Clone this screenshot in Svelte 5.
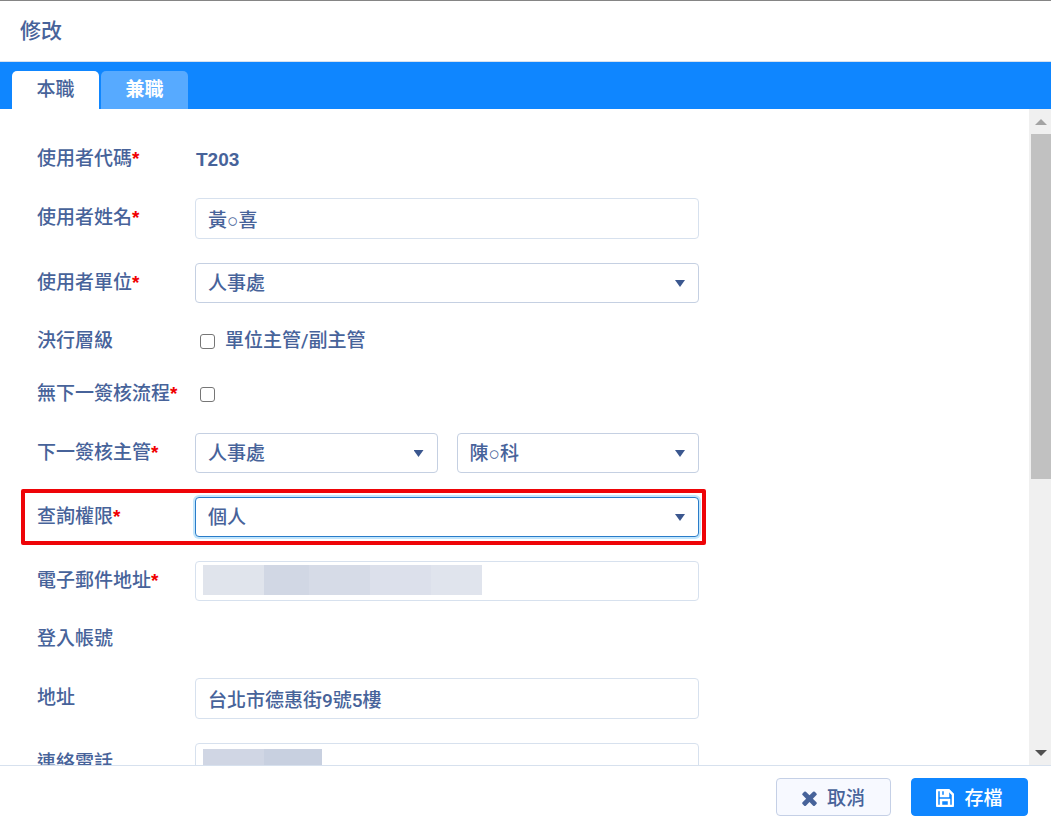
<script lang="ts">
	interface Tab {
		id: string;
		label: string;
	}

	const tabs: Tab[] = [
		{ id: 'main', label: '本職' },
		{ id: 'extra', label: '兼職' },
	];

	const units = ['人事處', '總務處', '會計處'];
	const managers = ['陳○科', '林○明'];
	const scopes = ['個人', '單位', '全部'];

	let activeTab = $state('main');
	let name = $state('黃○喜');
	let unit = $state('人事處');
	let isManager = $state(false);
	let noNextStep = $state(false);
	let nextUnit = $state('人事處');
	let nextManager = $state('陳○科');
	let scope = $state('個人');
	let email = $state('');
	let address = $state('台北市德惠街9號5樓');
	let phone = $state('');

	let bodyEl: HTMLDivElement | undefined = $state();

	function scrollBody(delta: number) {
		bodyEl?.scrollBy({ top: delta, behavior: 'smooth' });
	}
</script>

{#snippet label(text: string, required: boolean, target: string)}
	<label class="label" for={target}>{text}{#if required}<span class="required">*</span>{/if}</label>
{/snippet}

<div class="dialog">
	<header class="dialog-header">
		<h1>修改</h1>
	</header>

	<nav class="tabs" role="tablist">
		{#each tabs as tab (tab.id)}
			<button
				type="button"
				role="tab"
				class="tab"
				class:active={tab.id === activeTab}
				aria-selected={tab.id === activeTab}
				onclick={() => (activeTab = tab.id)}
			>
				{tab.label}
			</button>
		{/each}
	</nav>

	<div class="dialog-main">
		<div class="dialog-body" bind:this={bodyEl}>
			<form id="user-form" class="form" onsubmit={(e) => e.preventDefault()}>
				<div class="row">
					{@render label('使用者代碼', true, 'user-code')}
					<output class="value" id="user-code">T203</output>
				</div>

				<div class="row">
					{@render label('使用者姓名', true, 'user-name')}
					<input class="control" id="user-name" type="text" bind:value={name} />
				</div>

				<div class="row">
					{@render label('使用者單位', true, 'user-unit')}
					<div class="select-wrap">
						<select class="control" id="user-unit" bind:value={unit}>
							{#each units as item}<option>{item}</option>{/each}
						</select>
					</div>
				</div>

				<div class="row">
					{@render label('決行層級', false, 'is-manager')}
					<div class="check">
						<input id="is-manager" type="checkbox" bind:checked={isManager} />
						<label for="is-manager">單位主管/副主管</label>
					</div>
				</div>

				<div class="row">
					{@render label('無下一簽核流程', true, 'no-next')}
					<div class="check">
						<input id="no-next" type="checkbox" bind:checked={noNextStep} />
					</div>
				</div>

				<div class="row">
					{@render label('下一簽核主管', true, 'next-unit')}
					<div class="pair">
						<div class="select-wrap">
							<select class="control" id="next-unit" bind:value={nextUnit}>
								{#each units as item}<option>{item}</option>{/each}
							</select>
						</div>
						<div class="select-wrap">
							<select class="control" aria-label="下一簽核主管" bind:value={nextManager}>
								{#each managers as item}<option>{item}</option>{/each}
							</select>
						</div>
					</div>
				</div>

				<div class="row highlight">
					{@render label('查詢權限', true, 'scope')}
					<div class="select-wrap">
						<select class="control focused" id="scope" bind:value={scope}>
							{#each scopes as item}<option>{item}</option>{/each}
						</select>
					</div>
				</div>

				<div class="row">
					{@render label('電子郵件地址', true, 'email')}
					<div class="masked">
						<input class="control" id="email" type="email" bind:value={email} />
						<div class="mask mask-email" aria-hidden="true"></div>
					</div>
				</div>

				<div class="row">
					{@render label('登入帳號', false, 'account')}
					<output class="value" id="account"></output>
				</div>

				<div class="row">
					{@render label('地址', false, 'address')}
					<input class="control" id="address" type="text" bind:value={address} />
				</div>

				<div class="row">
					{@render label('連絡電話', false, 'phone')}
					<div class="masked">
						<input class="control" id="phone" type="tel" bind:value={phone} />
						<div class="mask mask-phone" aria-hidden="true"></div>
					</div>
				</div>
			</form>
		</div>

		<div class="scrollbar">
			<button type="button" class="scroll-btn up" aria-label="向上捲動" onclick={() => scrollBody(-64)}>
				<svg viewBox="0 0 12 6"><path d="M0 6L6 0L12 6Z" /></svg>
			</button>
			<div class="track"><div class="thumb"></div></div>
			<button type="button" class="scroll-btn down" aria-label="向下捲動" onclick={() => scrollBody(64)}>
				<svg viewBox="0 0 12 6"><path d="M0 0L6 6L12 0Z" /></svg>
			</button>
		</div>
	</div>

	<footer class="dialog-footer">
		<button type="button" class="btn">
			<svg class="icon-close" viewBox="302 334 1188 1220">
				<path d="M1490 1322q0 40-28 68l-136 136q-28 28-68 28t-68-28l-294-294-294 294q-28 28-68 28t-68-28l-136-136q-28-28-28-68t28-68l294-294-294-294q-28-28-28-68t28-68l136-136q28-28 68-28t68 28l294 294 294-294q28-28 68-28t68 28l136 136q28 28 28 68t-28 68l-294 294 294 294q28 28 28 68z" />
			</svg>
			取消
		</button>
		<button type="submit" form="user-form" class="btn primary">
			<svg class="icon-save" viewBox="0 0 18 18">
				<path fill-rule="evenodd" d="M1.500 0H13L18 5V16.500Q18 18 16.500 18H1.500Q0 18 0 16.500V1.500Q0 0 1.500 0ZM2 2V16H4V10H14V16H16V6L13 3V8H4V2ZM6 2V6H8V2ZM6 12V16H12V12Z" />
			</svg>
			存檔
		</button>
	</footer>
</div>

<style>
	:global(body) {
		margin: 0;
	}

	.dialog {
		--text: #47639a;
		--blue: #0f86ff;
		--line: #d7e1ee;
		display: flex;
		flex-direction: column;
		height: 100vh;
		box-sizing: border-box;
		border-top: 1px solid #858585;
		background: #fff;
		color: var(--text);
		font-family: Roboto, 'Liberation Sans', 'Noto Sans CJK TC', sans-serif;
		font-size: 19px;
		font-weight: 500;
		line-height: 29px;
	}

	button,
	input,
	select {
		box-sizing: border-box;
		margin: 0;
		font: inherit;
		color: inherit;
	}

	.dialog-header {
		padding: 16px 20px 15px;
		border-bottom: 1px solid var(--line);
	}

	h1 {
		margin: 0;
		font-size: 21px;
		font-weight: 500;
	}

	.tabs {
		display: flex;
		gap: 2px;
		padding: 9px 12px 0;
		background: var(--blue);
	}

	.tab {
		min-width: 87px;
		height: 38px;
		padding: 0 0 2px;
		border: 0;
		border-radius: 5px 5px 0 0;
		background: #57aaff;
		color: #fff;
		font-weight: 700;
		cursor: pointer;
	}

	.tab.active {
		background: #fff;
		color: var(--text);
		font-weight: 500;
	}

	.dialog-main {
		display: flex;
		flex: 1;
		min-height: 0;
	}

	.dialog-body {
		flex: 1;
		overflow-y: auto;
		scrollbar-width: none;
	}

	.form {
		display: flex;
		flex-direction: column;
		gap: 24px;
		max-width: 662px;
		padding: 36px 37px;
	}

	.row {
		display: grid;
		grid-template-columns: 158px 1fr;
		align-items: center;
		position: relative;
	}

	.label {
		padding-bottom: 2px;
		line-height: 27px;
		white-space: nowrap;
	}

	.required {
		color: #f00000;
		font-family: 'Liberation Sans', sans-serif;
		font-weight: 700;
	}

	.value {
		min-height: 29px;
		padding-left: 1px;
		font-family: 'Liberation Sans', 'Noto Sans CJK TC', sans-serif;
		font-weight: 700;
	}

	.control {
		display: block;
		width: 100%;
		height: 41px;
		padding: 0 12px;
		border: 1px solid var(--line);
		border-radius: 4px;
		background: #fff;
		outline: none;
	}

	select.control {
		height: 40px;
		border-color: #c5d0e2;
		appearance: none;
	}

	.control:focus,
	.control.focused {
		border-color: #2a7cc9;
		box-shadow: 0 0 0 2px #c3e6fc;
	}

	.select-wrap {
		position: relative;
	}

	.select-wrap::after {
		content: '';
		position: absolute;
		top: 17px;
		right: 14px;
		width: 10px;
		height: 7px;
		background: #3b578f;
		clip-path: polygon(0 0, 100% 0, 50% 100%);
		pointer-events: none;
	}

	.pair {
		display: grid;
		grid-template-columns: 1fr 1fr;
		gap: 19px;
	}

	.check {
		display: flex;
		align-items: center;
		gap: 10px;
		padding-left: 5px;
	}

	.check input {
		appearance: none;
		width: 15px;
		height: 15px;
		border: 1px solid #767676;
		border-radius: 3px;
		background: #fff;
	}

	.check input:checked {
		background: var(--blue);
	}

	.check label {
		padding-bottom: 2px;
		line-height: 27px;
	}

	.highlight::before {
		content: '';
		position: absolute;
		inset: -8px -7px -8px -16px;
		border: 4px solid #ee0408;
		border-radius: 2px;
		pointer-events: none;
	}

	.masked {
		position: relative;
	}

	.masked .control {
		height: 40px;
	}

	.mask {
		position: absolute;
		left: 8px;
		height: 30px;
	}

	.mask-email {
		top: 4px;
		width: 279px;
		background: linear-gradient(90deg, #e0e4ec 61px, #d1d7e4 61px 106px, #d6dbe7 106px 167px, #dce0eb 167px 228px, #e0e4ed 228px);
	}

	.mask-phone {
		top: 6px;
		width: 119px;
		background: linear-gradient(90deg, #d0d6e4 61px, #c8d0e0 61px);
	}

	.scrollbar {
		display: flex;
		flex-direction: column;
		width: 22px;
		background: #f0f0f0;
	}

	.scroll-btn {
		display: grid;
		place-items: center;
		height: 25px;
		padding: 0 0 0 2px;
		border: 0;
		background: none;
	}

	.scroll-btn svg {
		width: 12px;
		height: 6px;
		fill: #505050;
	}

	.scroll-btn.up svg {
		fill: #a3a3a3;
	}

	.track {
		flex: 1;
		padding-left: 2px;
	}

	.thumb {
		height: 57%;
		background: #c1c1c1;
	}

	.dialog-footer {
		display: flex;
		justify-content: flex-end;
		gap: 20px;
		padding: 12px 23px 10px;
		border-top: 1px solid var(--line);
	}

	.btn {
		display: flex;
		align-items: center;
		justify-content: center;
		gap: 10px;
		min-width: 115px;
		height: 38px;
		padding: 2px 24px 0;
		border: 1px solid #c5d0e6;
		border-radius: 4px;
		background: #f7f9ff;
		cursor: pointer;
	}

	.btn.primary {
		min-width: 117px;
		border-color: var(--blue);
		background: var(--blue);
		color: #fff;
	}

	.btn svg {
		fill: currentColor;
	}

	.icon-close {
		width: 15px;
		height: 15px;
	}

	.icon-save {
		width: 18px;
		height: 18px;
		stroke: currentColor;
		stroke-width: 0.5;
	}
</style>
